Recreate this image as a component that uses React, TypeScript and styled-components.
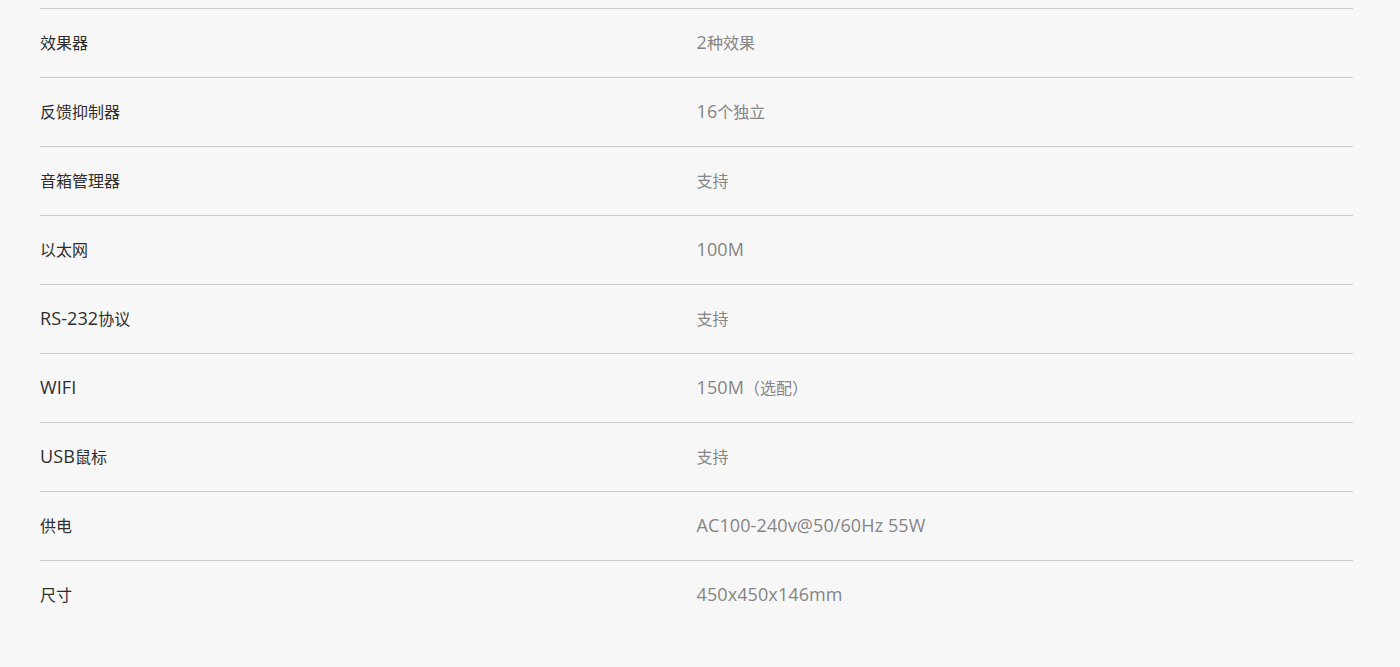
import React from 'react'
import styled, { createGlobalStyle } from 'styled-components'

const GlobalStyle = createGlobalStyle`
  html, body {
    margin: 0;
    padding: 0;
    background: #f7f7f7;
  }
  body {
    font-family: "Open Sans", "Noto Sans CJK SC", sans-serif;
  }
`

const PageStyled = styled.div`
  padding: 8px 47px 38px 40px;
  min-height: 667px;
  box-sizing: border-box;
`

const TableStyled = styled.div`
  display: flex;
  flex-direction: column;
`

const RowStyled = styled.div`
  display: grid;
  grid-template-columns: 1fr 1fr;
  height: 68px;
  align-items: center;
  border-top: 1px solid #cbcbcb;
`

const CellStyled = styled.div<{ $muted?: boolean }>`
  font-family: "Noto Sans CJK SC", sans-serif;
  font-size: 16px;
  line-height: 20px;
  color: ${({ $muted }) => ($muted ? '#858585' : '#2e2e2e')};
  white-space: nowrap;
  padding-bottom: 3px;
`

const LatinStyled = styled.span`
  font-family: "Open Sans", sans-serif;
  font-size: 18px;
  font-weight: 400;
  letter-spacing: 0.1px;
`

const specs: [string, string][] = [
  ['效果器', '2种效果'],
  ['反馈抑制器', '16个独立'],
  ['音箱管理器', '支持'],
  ['以太网', '100M'],
  ['RS-232协议', '支持'],
  ['WIFI', '150M（选配）'],
  ['USB鼠标', '支持'],
  ['供电', 'AC100-240v@50/60Hz 55W'],
  ['尺寸', '450x450x146mm'],
]

// latin runs get the wider latin face, CJK stays at 16px
const Mixed = ({ text }: { text: string }) => {
  const parts = text.match(/[\x20-\x7e]+|[^\x20-\x7e]+/g) || []
  return (
    <>
      {parts.map((p, i) =>
        /^[\x20-\x7e]+$/.test(p) ? <LatinStyled key={i}>{p}</LatinStyled> : <span key={i}>{p}</span>
      )}
    </>
  )
}

export default function App() {
  return (
    <>
      <GlobalStyle />
      <PageStyled>
        <TableStyled>
          {specs.map(([name, value]) => (
            <RowStyled key={name}>
              <CellStyled>
                <Mixed text={name} />
              </CellStyled>
              <CellStyled $muted>
                <Mixed text={value} />
              </CellStyled>
            </RowStyled>
          ))}
        </TableStyled>
      </PageStyled>
    </>
  )
}
